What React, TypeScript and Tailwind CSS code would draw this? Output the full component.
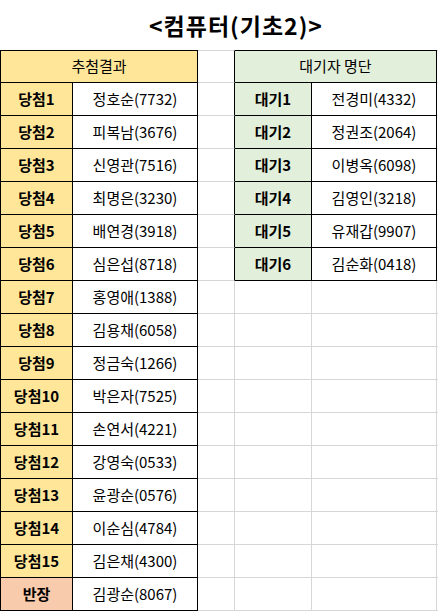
import React from "react";

// 추첨 결과 / 대기자 명단 — spreadsheet-style sheet
const winners = [
  ["당첨1", "정호순(7732)"],
  ["당첨2", "피복남(3676)"],
  ["당첨3", "신영관(7516)"],
  ["당첨4", "최명은(3230)"],
  ["당첨5", "배연경(3918)"],
  ["당첨6", "심은섭(8718)"],
  ["당첨7", "홍영애(1388)"],
  ["당첨8", "김용채(6058)"],
  ["당첨9", "정금숙(1266)"],
  ["당첨10", "박은자(7525)"],
  ["당첨11", "손연서(4221)"],
  ["당첨12", "강영숙(0533)"],
  ["당첨13", "윤광순(0576)"],
  ["당첨14", "이순심(4784)"],
  ["당첨15", "김은채(4300)"],
];

const waiting = [
  ["대기1", "전경미(4332)"],
  ["대기2", "정권조(2064)"],
  ["대기3", "이병옥(6098)"],
  ["대기4", "김영인(3218)"],
  ["대기5", "유재갑(9907)"],
  ["대기6", "김순화(0418)"],
];

const cell = "flex items-center justify-center border-r border-b";

export default function App() {
  const rows = [...winners, ["반장", "김광순(8067)"]];

  return (
    <div
      className="w-[438px] h-[611px] bg-white text-black overflow-hidden"
      style={{ fontFamily: '"Noto Sans CJK KR", "Noto Sans", sans-serif' }}
    >
      {/* Title — sits a little right of centre, as in the sheet */}
      <div className="h-[50px] flex items-center justify-center pl-[34px]">
        <h1 className="text-[23px] font-bold tracking-[1px] leading-none">&lt;컴퓨터(기초2)&gt;</h1>
      </div>

      <div className="grid grid-cols-[73px_125px_37px_77px_125px_1px] auto-rows-[33px] text-[15px]">
        {/* Header row */}
        <div className={`${cell} col-span-2 border-l border-t border-black bg-[#FFE699]`}>추첨결과</div>
        <div className={`${cell} border-t border-[#d6d6d6] border-r-black`} />
        <div className={`${cell} col-span-2 border-t border-black bg-[#E2EFDA]`}>대기자 명단</div>
        <div className="border-t border-b border-[#d6d6d6]" />

        {rows.map(([label, name], i) => {
          const w = waiting[i];
          const isLast = i === rows.length - 1;
          return (
            <React.Fragment key={label}>
              <div
                className={`${cell} border-l border-black font-bold ${isLast ? "bg-[#F8CBAD]" : "bg-[#FFE699]"}`}
              >
                {label}
              </div>
              <div className={`${cell} border-black`}>{name}</div>
              <div className={`${cell} border-b-[#d6d6d6] ${w ? "border-r-black" : "border-r-[#d6d6d6]"}`} />
              {w ? (
                <>
                  <div className={`${cell} border-black bg-[#E2EFDA] font-bold`}>{w[0]}</div>
                  <div className={`${cell} border-black`}>{w[1]}</div>
                </>
              ) : (
                <>
                  <div className={`${cell} border-[#d6d6d6]`} />
                  <div className={`${cell} border-[#d6d6d6]`} />
                </>
              )}
              <div className="border-b border-[#d6d6d6]" />
            </React.Fragment>
          );
        })}
      </div>
    </div>
  );
}
